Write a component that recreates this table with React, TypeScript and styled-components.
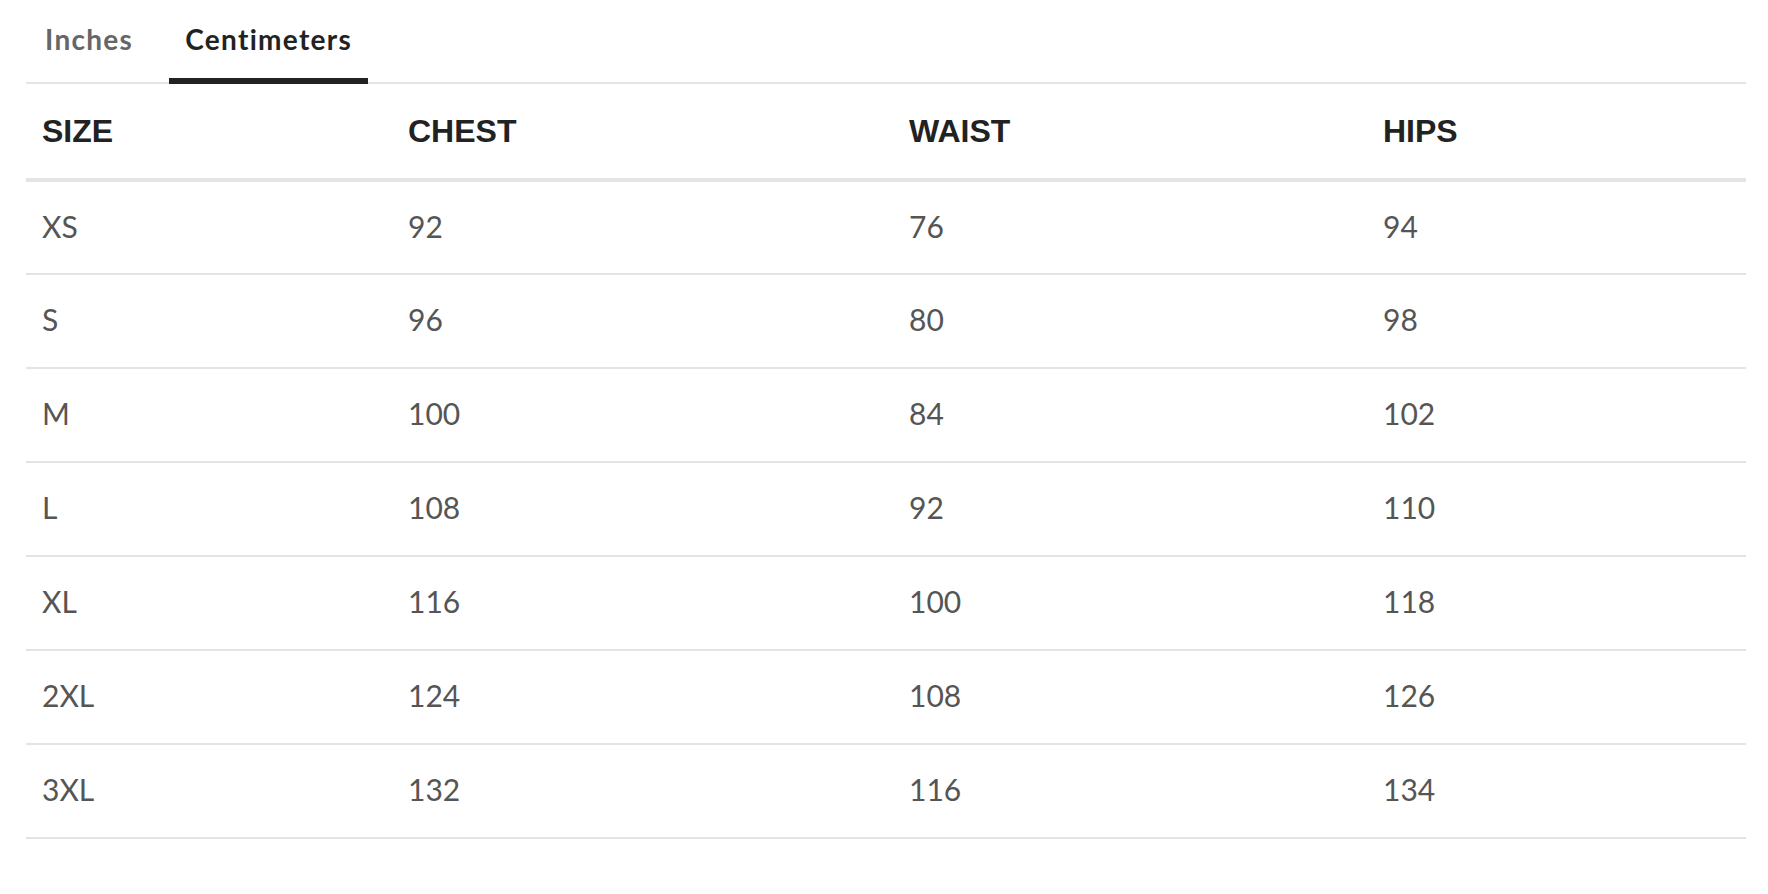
import React, { useState } from "react";
import styled, { createGlobalStyle } from "styled-components";

const Global = createGlobalStyle`
  html, body { margin: 0; padding: 0; background: #fff; }
  body { font-family: "Lato", "Liberation Sans", sans-serif; }
  * { box-sizing: border-box; }
`;

const Page = styled.div`
  padding: 0 22px 0 26px;
`;

const TabList = styled.div`
  display: flex;
  gap: 20px;
  padding-left: 3px;
  border-bottom: 2px solid #e4e4e4;
`;

const Tab = styled.button<{ $active?: boolean }>`
  height: 84px;
  margin-bottom: -2px;
  padding: 0 16px;
  background: none;
  border: none;
  border-bottom: 6px solid ${(p) => (p.$active ? "#222" : "transparent")};
  font-family: "Lato", sans-serif;
  font-weight: 700;
  font-size: 28px;
  letter-spacing: 1.3px;
  font-variant-ligatures: none;
  color: ${(p) => (p.$active ? "#222" : "#666")};
  cursor: pointer;
  display: flex;
  align-items: center;
`;

const Table = styled.table`
  width: 100%;
  border-collapse: collapse;
  table-layout: fixed;
`;

const HeadCell = styled.th`
  height: 96px;
  padding: 0 16px;
  text-align: left;
  vertical-align: middle;
  font-family: "Liberation Sans", Arial, sans-serif;
  font-weight: 700;
  font-size: 32px;
  color: #222;
  border-bottom: 4px solid #e4e4e4;
`;

const Cell = styled.td`
  height: 94px;
  padding: 0 16px 4px;
  text-align: left;
  vertical-align: middle;
  font-family: "Lato", sans-serif;
  font-weight: 400;
  font-size: 30px;
  color: #555;
  border-bottom: 2px solid #e4e4e4;
`;

const cols = [366, 501, 474, 379];
const headers = ["SIZE", "CHEST", "WAIST", "HIPS"];

const cm = [
  ["XS", "92", "76", "94"],
  ["S", "96", "80", "98"],
  ["M", "100", "84", "102"],
  ["L", "108", "92", "110"],
  ["XL", "116", "100", "118"],
  ["2XL", "124", "108", "126"],
  ["3XL", "132", "116", "134"],
];

const inches = [
  ["XS", "36", "30", "37"],
  ["S", "38", "31.5", "38.5"],
  ["M", "39.5", "33", "40"],
  ["L", "42.5", "36", "43.5"],
  ["XL", "45.5", "39.5", "46.5"],
  ["2XL", "49", "42.5", "49.5"],
  ["3XL", "52", "45.5", "53"],
];

export default function App() {
  const [unit, setUnit] = useState<"in" | "cm">("cm");
  const rows = unit === "cm" ? cm : inches;
  return (
    <Page>
      <Global />
      <TabList>
        <Tab $active={unit === "in"} onClick={() => setUnit("in")}>Inches</Tab>
        <Tab $active={unit === "cm"} onClick={() => setUnit("cm")}>Centimeters</Tab>
      </TabList>
      <Table>
        <colgroup>
          {cols.map((w, i) => (
            <col key={i} style={{ width: w }} />
          ))}
        </colgroup>
        <thead>
          <tr>
            {headers.map((h) => (
              <HeadCell key={h}>{h}</HeadCell>
            ))}
          </tr>
        </thead>
        <tbody>
          {rows.map((r) => (
            <tr key={r[0]}>
              {r.map((v, i) => (
                <Cell key={i}>{v}</Cell>
              ))}
            </tr>
          ))}
        </tbody>
      </Table>
    </Page>
  );
}
